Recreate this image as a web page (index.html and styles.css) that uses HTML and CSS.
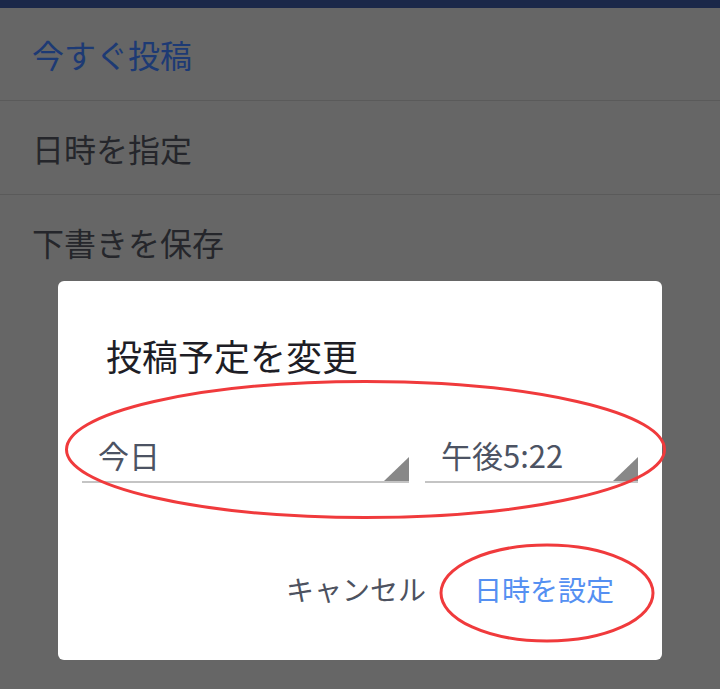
FILE: index.html
```html
<!DOCTYPE html>
<html lang="ja">
<head>
  <meta charset="UTF-8">
  <meta name="viewport" content="width=device-width, initial-scale=1.0">
  <title>投稿予定を変更</title>
  <link rel="stylesheet" href="styles.css">
</head>
<body>
  <div class="topbar"></div>

  <ul class="menu">
    <li class="menu-item current">今すぐ投稿</li>
    <li class="menu-item">日時を指定</li>
    <li class="menu-item last">下書きを保存</li>
  </ul>

  <div class="dialog">
    <h2 class="dialog-title">投稿予定を変更</h2>
    <div class="fields">
      <div class="field field-date">今日<span class="corner"></span></div>
      <div class="field field-time">午後5:22<span class="corner"></span></div>
    </div>
    <div class="actions">
      <button class="btn btn-cancel">キャンセル</button>
      <button class="btn btn-ok">日時を設定</button>
    </div>
  </div>

  <!-- 注釈の赤い丸 -->
  <svg class="marks" width="720" height="689" viewBox="0 0 720 689">
    <ellipse cx="365.5" cy="449.5" rx="299" ry="68" fill="none" stroke="#f03a3c" stroke-width="3"/>
    <ellipse cx="547" cy="593" rx="106" ry="48" fill="none" stroke="#f03a3c" stroke-width="3"/>
  </svg>
</body>
</html>
```

FILE: styles.css
```css
body {
  margin: 0;
  background-color: #666666;
  font-family: "Noto Sans CJK JP", "Noto Sans", sans-serif;
  width: 720px;
  height: 689px;
  overflow: hidden;
}
.topbar {
  height: 8px;
  background-color: #1b2849;
}
.menu {
  list-style: none;
  margin: 0;
  padding: 0;
}
.menu-item {
  display: flex;
  align-items: center;
  height: 93px;
  padding-left: 32px;
  border-bottom: 1px solid #5a5a5a;
  font-size: 32px;
  color: #25262b;
}
.menu-item.current {
  height: 92px;
  color: #1d3a74;
}
.menu-item.last { border-bottom: none; }

.dialog {
  position: fixed;
  left: 58px;
  top: 281px;
  width: 604px;
  height: 379px;
  box-sizing: border-box;
  background-color: #fff;
  border-radius: 6px;
}
.dialog-title {
  margin: 53px 0 0 48px;
  font-size: 36px;
  font-weight: normal;
  line-height: 42px;
  color: #1e1e26;
}
.fields {
  display: flex;
  gap: 16px;
  margin: 55px 24px 0 24px;
}
.field {
  position: relative;
  display: flex;
  align-items: center;
  height: 52px;
  padding: 0 0 4px 16px;
  box-sizing: border-box;
  border-bottom: 2px solid #c4c4c4;
  font-size: 31px;
  color: #4c5363;
}
.field-date { width: 327px; }
.field-time { width: 213px; }
.corner {
  position: absolute;
  right: 0;
  bottom: 0;
  width: 25px;
  height: 24px;
  background-color: #888;
  clip-path: polygon(100% 0, 100% 100%, 0 100%);
}
.actions {
  display: flex;
  justify-content: flex-end;
  gap: 48px;
  margin-top: 86px;
  padding-right: 48px;
}
.btn {
  padding: 0;
  border: none;
  background: none;
  font-family: inherit;
  font-size: 28px;
  line-height: 40px;
  cursor: pointer;
}
.btn-cancel { color: #4d5260; }
.btn-ok { color: #5590f2; }

.marks {
  position: fixed;
  left: 0;
  top: 0;
  pointer-events: none;
}
```
